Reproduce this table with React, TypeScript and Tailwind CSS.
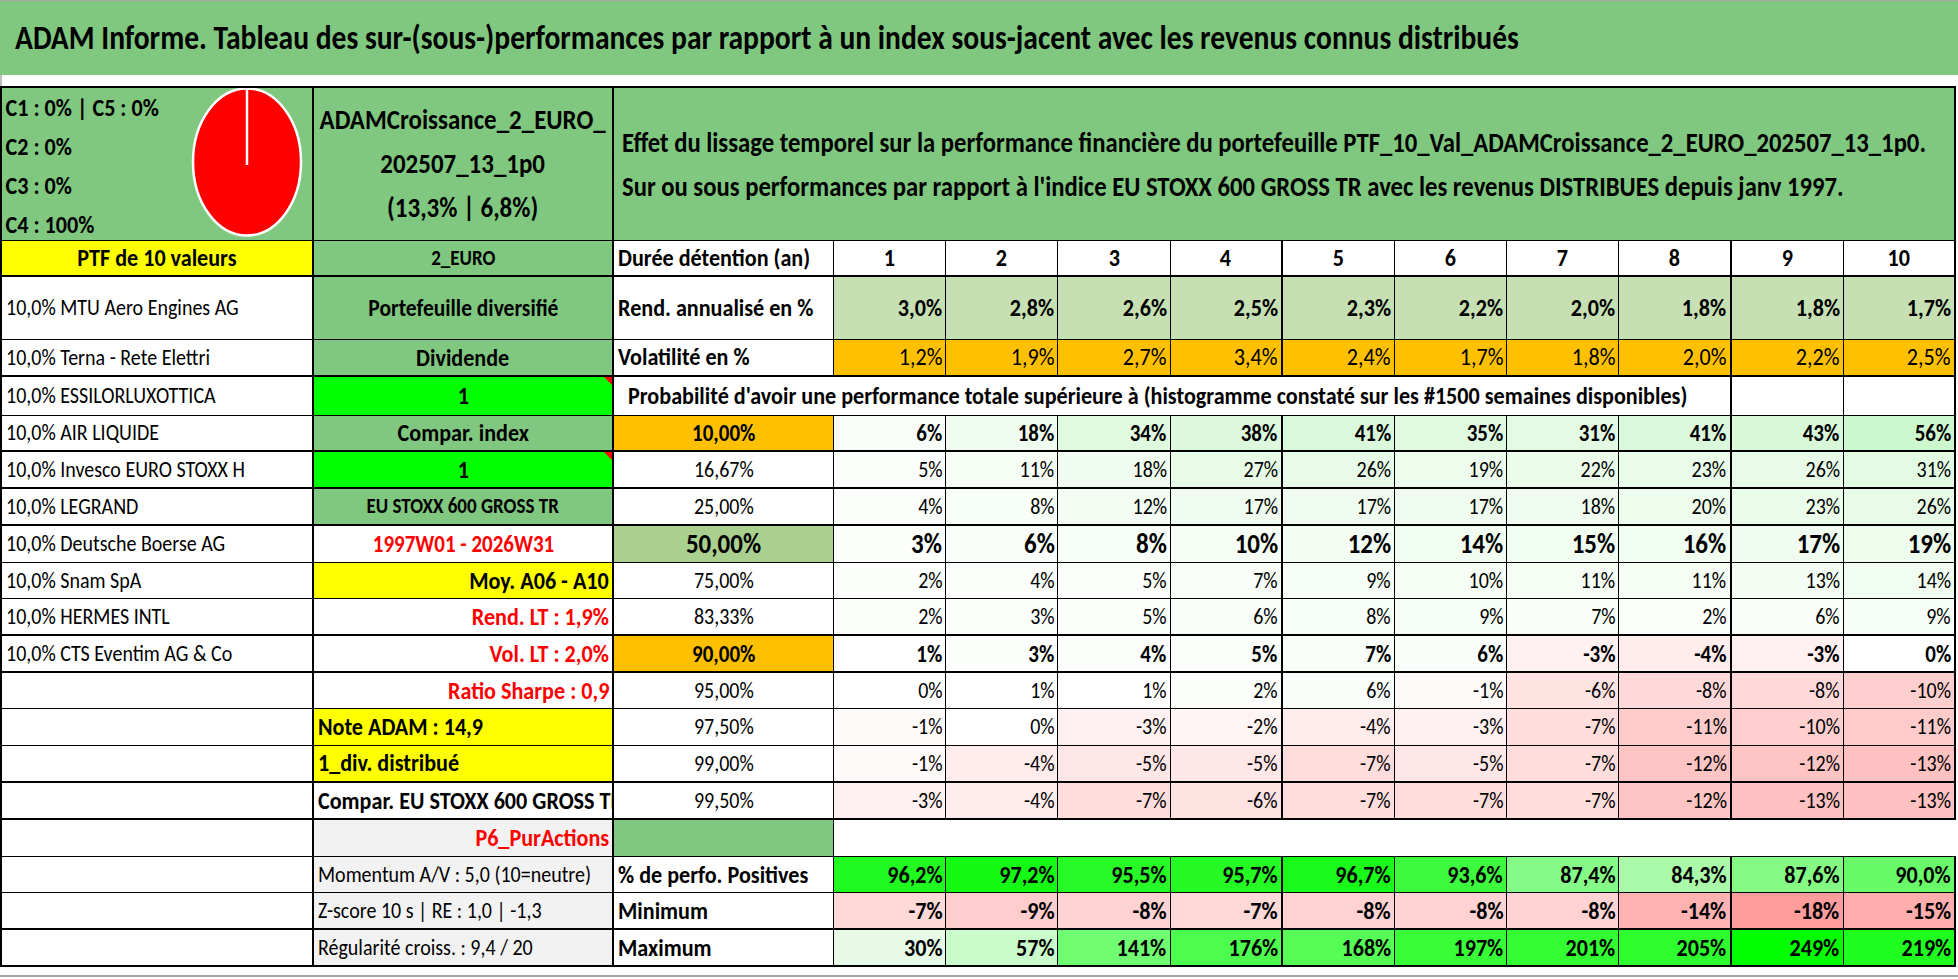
import React from "react";

type Kind = "bold" | "norm" | "big";

const FONT = "font-['Carlito','Calibri','Liberation_Sans_Narrow','DejaVu_Sans_Condensed',sans-serif]";

const REND = ["3,0%", "2,8%", "2,6%", "2,5%", "2,3%", "2,2%", "2,0%", "1,8%", "1,8%", "1,7%"];
const VOL = ["1,2%", "1,9%", "2,7%", "3,4%", "2,4%", "1,7%", "1,8%", "2,0%", "2,2%", "2,5%"];

const STOCKS = [
  "10,0% MTU Aero Engines AG",
  "10,0% Terna - Rete Elettri",
  "10,0% ESSILORLUXOTTICA",
  "10,0% AIR LIQUIDE",
  "10,0% Invesco EURO STOXX H",
  "10,0% LEGRAND",
  "10,0% Deutsche Boerse AG",
  "10,0% Snam SpA",
  "10,0% HERMES INTL",
  "10,0% CTS Eventim AG & Co",
];

const PROB: { seuil: string; kind: Kind; vals: number[] }[] = [
  { seuil: "10,00%", kind: "bold", vals: [6, 18, 34, 38, 41, 35, 31, 41, 43, 56] },
  { seuil: "16,67%", kind: "norm", vals: [5, 11, 18, 27, 26, 19, 22, 23, 26, 31] },
  { seuil: "25,00%", kind: "norm", vals: [4, 8, 12, 17, 17, 17, 18, 20, 23, 26] },
  { seuil: "50,00%", kind: "big", vals: [3, 6, 8, 10, 12, 14, 15, 16, 17, 19] },
  { seuil: "75,00%", kind: "norm", vals: [2, 4, 5, 7, 9, 10, 11, 11, 13, 14] },
  { seuil: "83,33%", kind: "norm", vals: [2, 3, 5, 6, 8, 9, 7, 2, 6, 9] },
  { seuil: "90,00%", kind: "bold", vals: [1, 3, 4, 5, 7, 6, -3, -4, -3, 0] },
  { seuil: "95,00%", kind: "norm", vals: [0, 1, 1, 2, 6, -1, -6, -8, -8, -10] },
  { seuil: "97,50%", kind: "norm", vals: [-1, 0, -3, -2, -4, -3, -7, -11, -10, -11] },
  { seuil: "99,00%", kind: "norm", vals: [-1, -4, -5, -5, -7, -5, -7, -12, -12, -13] },
  { seuil: "99,50%", kind: "norm", vals: [-3, -4, -7, -6, -7, -7, -7, -12, -13, -13] },
];

// colonne B, lignes 5..15
const SIDE: { text: string; cls: string; tri?: boolean }[] = [
  { text: "Compar. index", cls: "bg-[#80C880] justify-center font-bold text-[25px]" },
  { text: "1", cls: "bg-[#00FF00] justify-center font-bold text-[25px]", tri: true },
  { text: "EU STOXX 600 GROSS TR", cls: "bg-[#80C880] justify-center font-bold text-[21.5px]" },
  { text: "1997W01 - 2026W31", cls: "justify-center font-bold text-[23.7px] text-[#FF0000]" },
  { text: "Moy. A06 - A10", cls: "bg-[#FFFF00] justify-end pr-[3px] font-bold text-[25px]" },
  { text: "Rend. LT : 1,9%", cls: "justify-end pr-[3px] font-bold text-[25px] text-[#FF0000]" },
  { text: "Vol. LT : 2,0%", cls: "justify-end pr-[3px] font-bold text-[25px] text-[#FF0000]" },
  { text: "Ratio Sharpe : 0,9", cls: "justify-end pr-[3px] font-bold text-[25px] text-[#FF0000]" },
  { text: "Note ADAM : 14,9", cls: "bg-[#FFFF00] !items-end pl-[4px] font-bold text-[25px]" },
  { text: "1_div. distribué", cls: "bg-[#FFFF00] !items-end pl-[4px] font-bold text-[25px]" },
  { text: "Compar. EU STOXX 600 GROSS TR", cls: "pl-[4px] font-bold text-[25px]" },
];

const POSITIVES = ["96,2%", "97,2%", "95,5%", "95,7%", "96,7%", "93,6%", "87,4%", "84,3%", "87,6%", "90,0%"];
const MINIMUM = [-7, -9, -8, -7, -8, -8, -8, -14, -18, -15];
const MAXIMUM = [30, 57, 141, 176, 168, 197, 201, 205, 249, 219];

const R2 = [0, 1, 6, 10, 12];
const B2 = [false, true, false, true, false, true, true, true, false, false, true, true, false, false, true, true, false, false, true, true];

const rgb = (r: number, g: number, b: number) => `rgb(${Math.round(r)},${Math.round(g)},${Math.round(b)})`;

function probBg(v: number) {
  if (v > 0) return rgb(255 - 0.9 * v, 255 - 0.15 * v, 255 - 0.9 * v);
  if (v < 0) return rgb(255, 255 - 4.8 * -v, 255 - 4.8 * -v);
  return "#ffffff";
}

function posBg(s: string) {
  const t = (parseFloat(s.replace(",", ".")) - 84.3) / 12.9;
  return rgb(170 - 150 * t, 250, 170 - 150 * t);
}

function minBg(v: number) {
  return rgb(255, 254 - 5.4 * -v, 254 - 5.4 * -v);
}

function maxBg(v: number) {
  const t = (v - 30) / 219;
  return rgb(230 - 230 * t, 250 + 5 * t, 230 - 230 * t);
}

// le texte du classeur est un Calibri un peu serré : on le resserre horizontalement
function Sq({ o, className = "", children }: { o: string; className?: string; children: React.ReactNode }) {
  return <span className={`inline-block scale-x-[0.885] ${o} ${className}`}>{children}</span>;
}

function Cell({
  r,
  c,
  span = 1,
  className = "",
  style,
  tri,
  children,
}: {
  r: number;
  c: number;
  span?: number;
  className?: string;
  style?: React.CSSProperties;
  tri?: boolean;
  children?: React.ReactNode;
}) {
  const last = c + span - 1;
  const spanCls = span === 11 ? "col-span-11" : span === 10 ? "col-span-10" : span === 9 ? "col-span-9" : "";
  const edge = `${R2.includes(last) ? "border-r-2" : "border-r"} ${B2[r] ? "border-b-2" : "border-b"}`;
  const o = className.includes("justify-end")
    ? "origin-right"
    : className.includes("justify-center")
      ? "origin-center"
      : "origin-left";
  return (
    <div
      className={`relative flex min-w-0 items-center overflow-hidden whitespace-nowrap border-black ${edge} ${spanCls} ${className}`}
      style={style}
    >
      {children !== undefined && children !== "" && <Sq o={o}>{children}</Sq>}
      {tri && (
        <span className="absolute right-0 top-0 h-0 w-0 border-l-[8px] border-t-[8px] border-l-transparent border-t-[#FF0000]" />
      )}
    </div>
  );
}

function Pie() {
  return (
    <svg width="112" height="153" viewBox="0 0 112 153" className="mr-[9px] shrink-0">
      <ellipse cx="56" cy="74" rx="54" ry="73.5" fill="#FF0000" stroke="#ffffff" strokeWidth="2.5" />
      <line x1="56" y1="1" x2="56" y2="77" stroke="#ffffff" strokeWidth="2.5" />
    </svg>
  );
}

export default function App() {
  const cols = Array.from({ length: 10 }, (_, i) => i);

  return (
    <div className={`h-[979px] w-[1958px] overflow-hidden bg-white text-black ${FONT}`}>
      <div className="flex h-[75px] items-center border-t border-[#a6a6a6] bg-[#80C880] pl-[15px] text-[33.4px] font-bold">
        <Sq o="origin-left">
          ADAM Informe. Tableau des sur-(sous-)performances par rapport à un index sous-jacent avec les revenus connus distribués
        </Sq>
      </div>
      <div className="h-[11px] border-l-2 border-[#bdbdbd]" />

      <div className="grid w-[1956px] grid-cols-[312px_300px_220px_repeat(10,112.2px)] grid-rows-[153px_36px_63px_37px_39px_36px_37px_37px_37px_36px_37px_37px_36px_37px_37px_37px_37px_36px_37px_37px] border-l-2 border-t-2 border-black">
        {/* ligne 0 : en-tête */}
        <div className="flex items-start justify-between overflow-hidden border-b border-r-2 border-black bg-[#80C880]">
          <div className="flex origin-left scale-x-[0.885] flex-col whitespace-nowrap pl-[4px] text-[25px] font-bold leading-[39px]">
            <span>C1 : 0% | C5 : 0%</span>
            <span>C2 : 0%</span>
            <span>C3 : 0%</span>
            <span>C4 : 100%</span>
          </div>
          <Pie />
        </div>
        <div className="flex items-center justify-center overflow-hidden border-b border-r-2 border-black bg-[#80C880]">
          <div className="flex origin-center scale-x-[0.885] flex-col items-center whitespace-nowrap text-[28.2px] font-bold leading-[44px]">
            <span>ADAMCroissance_2_EURO_</span>
            <span>202507_13_1p0</span>
            <span>(13,3% | 6,8%)</span>
          </div>
        </div>
        <div className="col-span-11 flex items-center overflow-hidden border-b border-r-2 border-black bg-[#80C880] pl-[8px]">
          <div className="flex origin-left scale-x-[0.885] flex-col whitespace-nowrap text-[27.9px] font-bold leading-[44px]">
            <span>Effet du lissage temporel sur la performance financière du portefeuille PTF_10_Val_ADAMCroissance_2_EURO_202507_13_1p0.</span>
            <span>Sur ou sous performances par rapport à l'indice EU STOXX 600 GROSS TR avec les revenus DISTRIBUES depuis janv 1997.</span>
          </div>
        </div>

        {/* ligne 1 : durée */}
        <Cell r={1} c={0} className="justify-center bg-[#FFFF00] text-[25px] font-bold">PTF de 10 valeurs</Cell>
        <Cell r={1} c={1} className="justify-center bg-[#80C880] text-[21.5px] font-bold">2_EURO</Cell>
        <Cell r={1} c={2} className="pl-[4px] text-[25px] font-bold">Durée détention (an)</Cell>
        {cols.map((i) => (
          <Cell key={`d${i}`} r={1} c={3 + i} className="justify-center text-[25px] font-bold">
            {i + 1}
          </Cell>
        ))}

        {/* ligne 2 : rendement */}
        <Cell r={2} c={0} className="pl-[4px] text-[22.6px]">{STOCKS[0]}</Cell>
        <Cell r={2} c={1} className="justify-center bg-[#80C880] text-[24.3px] font-bold">Portefeuille diversifié</Cell>
        <Cell r={2} c={2} className="pl-[4px] text-[25px] font-bold">Rend. annualisé en %</Cell>
        {REND.map((v, i) => (
          <Cell key={`r${i}`} r={2} c={3 + i} className="justify-end bg-[#C6E0B4] pr-[3px] text-[25px] font-bold">
            {v}
          </Cell>
        ))}

        {/* ligne 3 : volatilité */}
        <Cell r={3} c={0} className="pl-[4px] text-[22.6px]">{STOCKS[1]}</Cell>
        <Cell r={3} c={1} className="justify-center bg-[#80C880] text-[25px] font-bold">Dividende</Cell>
        <Cell r={3} c={2} className="!items-end pl-[4px] text-[25px] font-bold">Volatilité en %</Cell>
        {VOL.map((v, i) => (
          <Cell key={`v${i}`} r={3} c={3 + i} className="!items-end justify-end bg-[#FFC000] pr-[3px] text-[25px]">
            {v}
          </Cell>
        ))}

        {/* ligne 4 : probabilité */}
        <Cell r={4} c={0} className="pl-[4px] text-[22.6px]">{STOCKS[2]}</Cell>
        <Cell r={4} c={1} className="justify-center bg-[#00FF00] text-[25px] font-bold" tri>
          1
        </Cell>
        <Cell r={4} c={2} span={9} className="pl-[14px] text-[25px] font-bold">
          Probabilité d'avoir une performance totale supérieure à (histogramme constaté sur les #1500 semaines disponibles)
        </Cell>
        <Cell r={4} c={11} />
        <Cell r={4} c={12} />

        {/* lignes 5..15 : histogramme */}
        {PROB.map((row, k) => {
          const r = 5 + k;
          const side = SIDE[k];
          const stock = STOCKS[r - 2] ?? "";
          const seuilCls =
            row.kind === "big"
              ? "bg-[#A9D08E] text-[28.2px] font-bold"
              : row.kind === "bold"
                ? "bg-[#FFC000] text-[23.7px] font-bold"
                : "text-[22.6px]";
          const valCls =
            row.kind === "big" ? "text-[28.2px] font-bold" : row.kind === "bold" ? "text-[23.7px] font-bold" : "text-[22.6px]";
          return (
            <React.Fragment key={row.seuil}>
              <Cell r={r} c={0} className="pl-[4px] text-[22.6px]">{stock}</Cell>
              <Cell r={r} c={1} className={side.cls} tri={side.tri}>
                {side.text}
              </Cell>
              <Cell r={r} c={2} className={`justify-center ${seuilCls}`}>{row.seuil}</Cell>
              {row.vals.map((v, i) => (
                <Cell
                  key={i}
                  r={r}
                  c={3 + i}
                  className={`justify-end pr-[3px] ${valCls}`}
                  style={{ backgroundColor: probBg(v) }}
                >
                  {v}%
                </Cell>
              ))}
            </React.Fragment>
          );
        })}

        {/* ligne 16 : P6 */}
        <Cell r={16} c={0} />
        <Cell r={16} c={1} className="justify-end bg-[#F2F2F2] pr-[3px] text-[25px] font-bold text-[#FF0000]">P6_PurActions</Cell>
        <Cell r={16} c={2} className="bg-[#80C880]" />
        <div className="col-span-10 border-b border-black bg-white" />

        {/* lignes 17..19 : synthèse */}
        <Cell r={17} c={0} />
        <Cell r={17} c={1} className="bg-[#F2F2F2] pl-[4px] text-[22.6px]">Momentum A/V : 5,0 (10=neutre)</Cell>
        <Cell r={17} c={2} className="pl-[4px] text-[25px] font-bold">% de perfo. Positives</Cell>
        {POSITIVES.map((v, i) => (
          <Cell key={`p${i}`} r={17} c={3 + i} className="justify-end pr-[3px] text-[25px] font-bold" style={{ backgroundColor: posBg(v) }}>
            {v}
          </Cell>
        ))}

        <Cell r={18} c={0} />
        <Cell r={18} c={1} className="bg-[#F2F2F2] pl-[4px] text-[22.6px]">Z-score 10 s | RE : 1,0 | -1,3</Cell>
        <Cell r={18} c={2} className="pl-[4px] text-[25px] font-bold">Minimum</Cell>
        {MINIMUM.map((v, i) => (
          <Cell key={`m${i}`} r={18} c={3 + i} className="justify-end pr-[3px] text-[25px] font-bold" style={{ backgroundColor: minBg(v) }}>
            {v}%
          </Cell>
        ))}

        <Cell r={19} c={0} />
        <Cell r={19} c={1} className="bg-[#F2F2F2] pl-[4px] text-[22.6px]">Régularité croiss. : 9,4 / 20</Cell>
        <Cell r={19} c={2} className="pl-[4px] text-[25px] font-bold">Maximum</Cell>
        {MAXIMUM.map((v, i) => (
          <Cell key={`x${i}`} r={19} c={3 + i} className="justify-end pr-[3px] text-[25px] font-bold" style={{ backgroundColor: maxBg(v) }}>
            {v}%
          </Cell>
        ))}
      </div>

      <div className="mt-[8px] h-[2px] w-full bg-[#a6a6a6]" />
    </div>
  );
}
